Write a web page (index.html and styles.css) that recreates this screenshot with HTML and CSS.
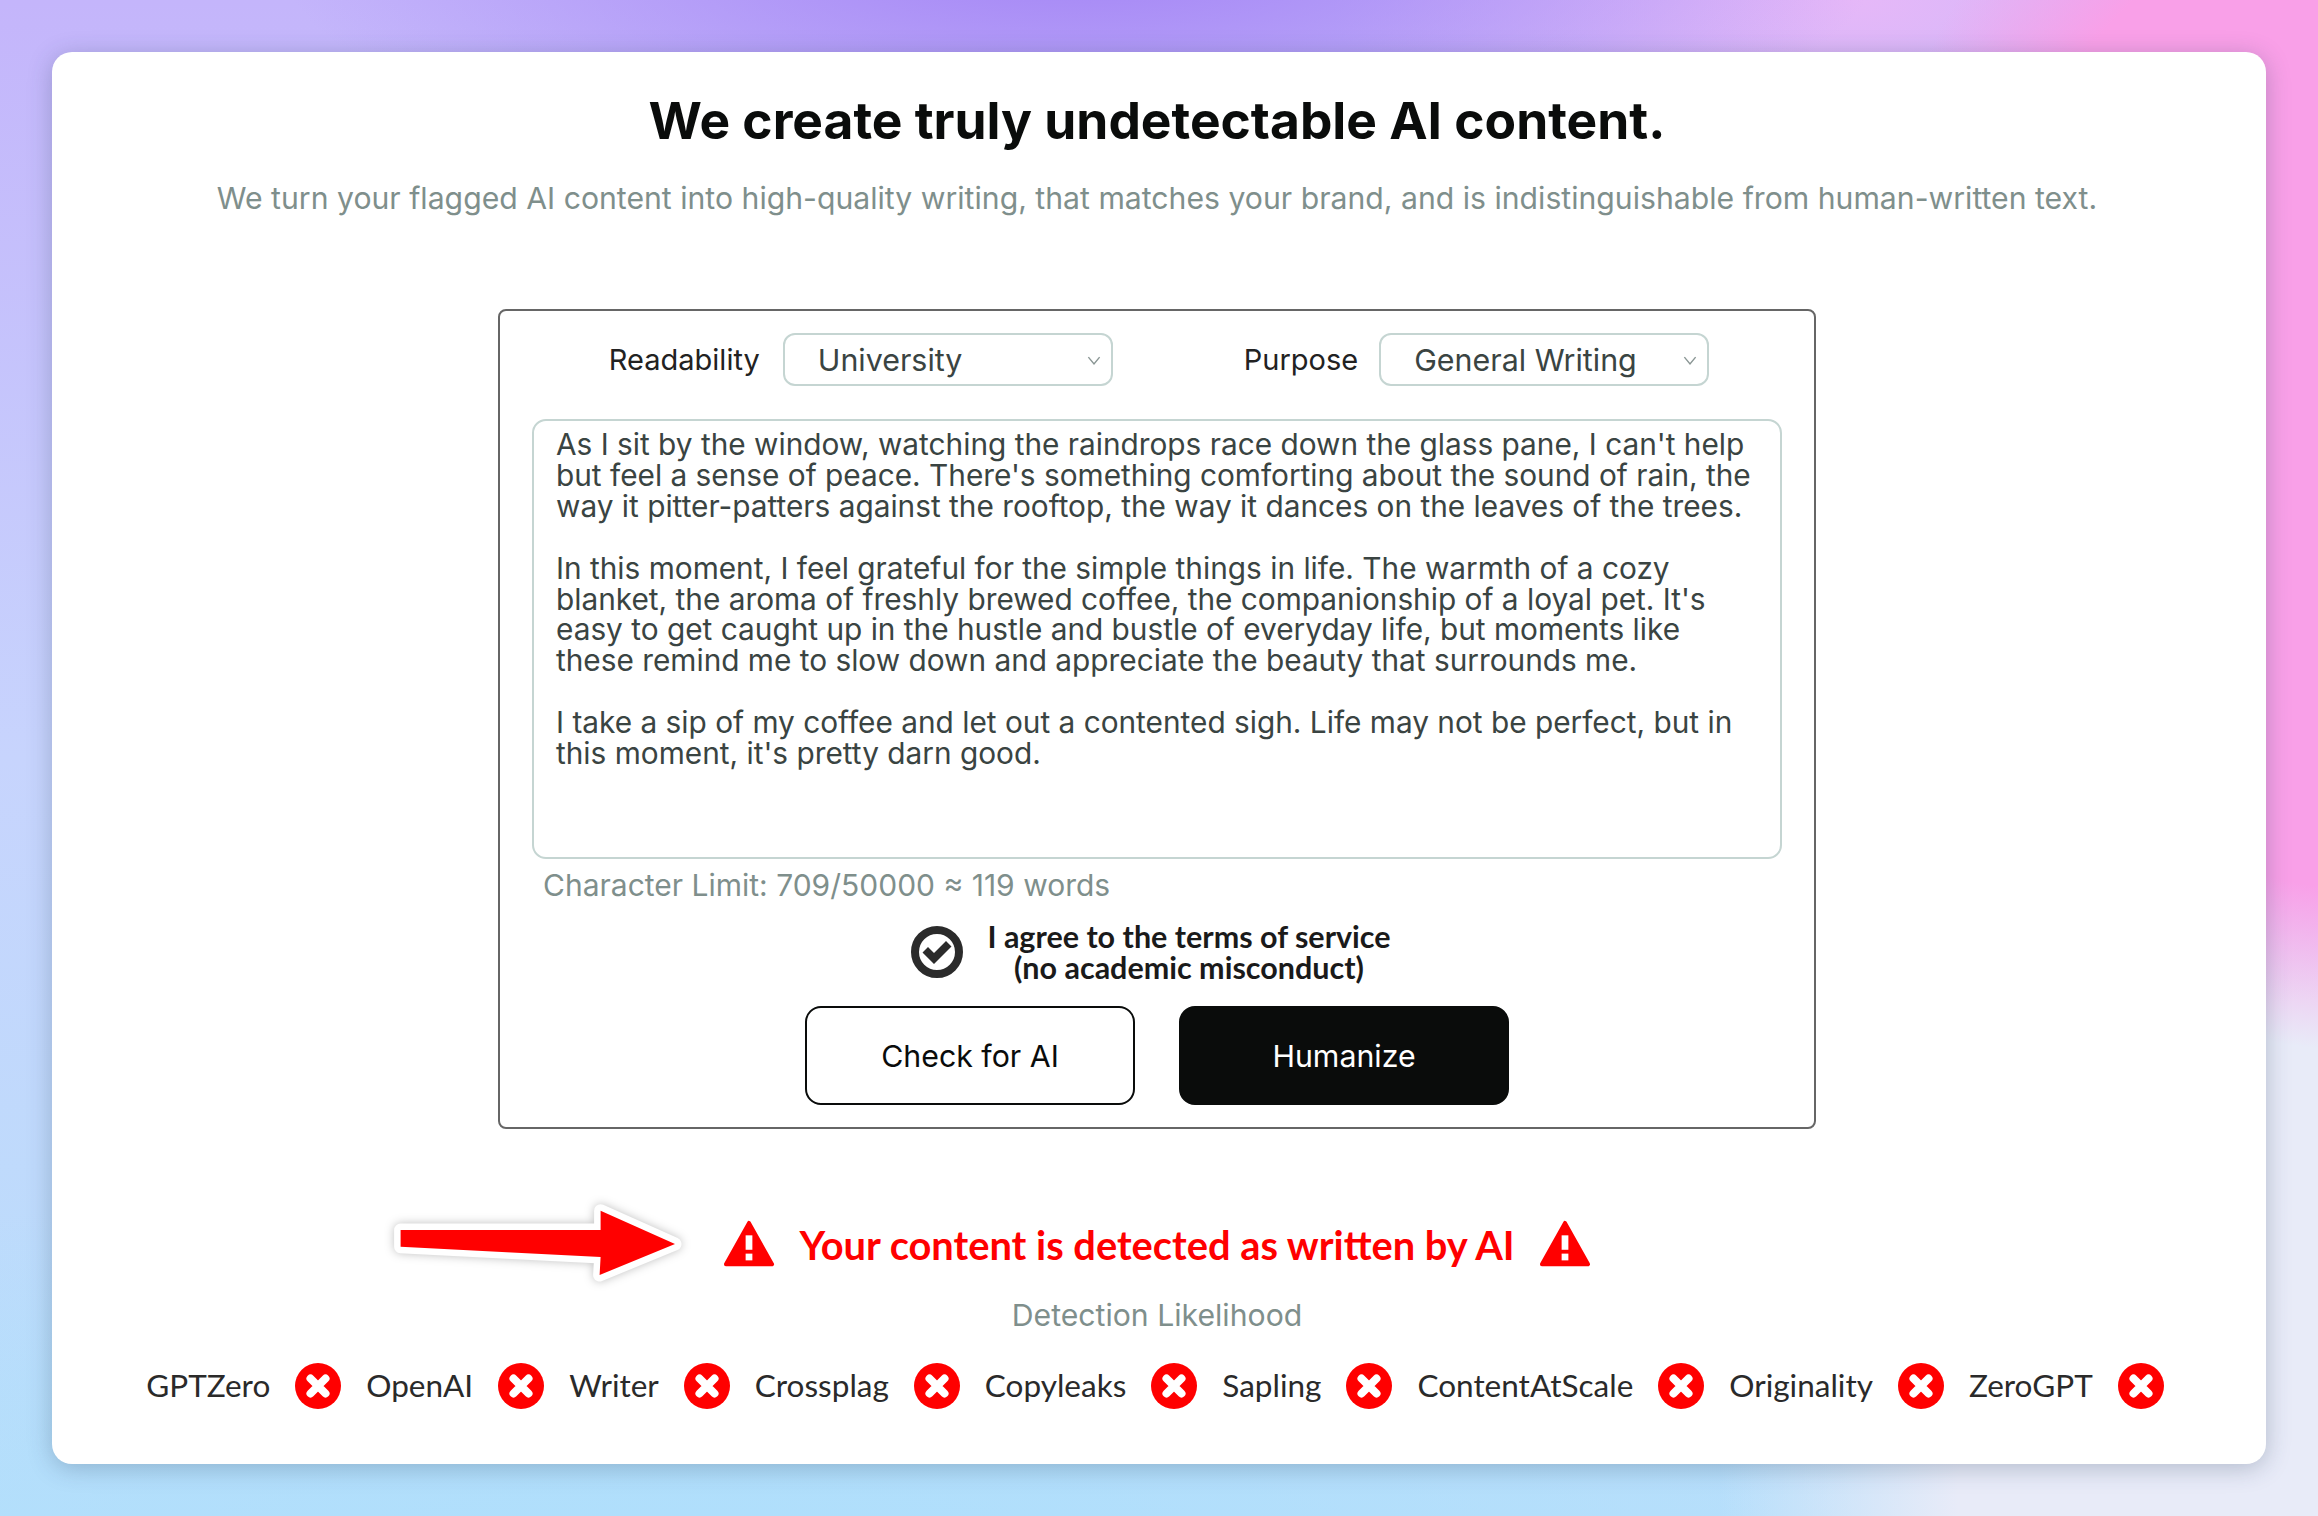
FILE: index.html
```html
<!DOCTYPE html>
<html>
<head>
    <title>Undetectable AI</title>
    <link rel="stylesheet" href="styles.css">
</head>
<body>
    <div class="card">
        <h1>We create truly undetectable AI content.</h1>
        <p class="subtitle">We turn your flagged AI content into high-quality writing, that matches your brand, and is indistinguishable from human-written text.</p>

        <div class="editor">
            <div class="options">
                <label for="readability" class="first-label">Readability</label>
                <div class="picker-wrap">
                    <select id="readability" class="picker">
                        <option>University</option>
                    </select>
                    <svg class="chevron" viewBox="0 0 12 8"><path d="M1 1l5 6 5-6" fill="none" stroke="#8a9694" stroke-width="1.3"/></svg>
                </div>
                <label for="purpose" class="second-label">Purpose</label>
                <div class="picker-wrap">
                    <select id="purpose" class="picker">
                        <option>General Writing</option>
                    </select>
                    <svg class="chevron" viewBox="0 0 12 8"><path d="M1 1l5 6 5-6" fill="none" stroke="#8a9694" stroke-width="1.3"/></svg>
                </div>
            </div>
            <textarea id="content" class="content" spellcheck="false">As I sit by the window, watching the raindrops race down the glass pane, I can't help but feel a sense of peace. There's something comforting about the sound of rain, the way it pitter-patters against the rooftop, the way it dances on the leaves of the trees.

In this moment, I feel grateful for the simple things in life. The warmth of a cozy blanket, the aroma of freshly brewed coffee, the companionship of a loyal pet. It's easy to get caught up in the hustle and bustle of everyday life, but moments like these remind me to slow down and appreciate the beauty that surrounds me.

I take a sip of my coffee and let out a contented sigh. Life may not be perfect, but in this moment, it's pretty darn good.</textarea>
            <div class="limit">Character Limit: 709/50000 ≈ 119 words</div>
            <div class="agree">
                <svg class="agree-icon" viewBox="0 0 52 52">
                    <circle cx="26" cy="26" r="22" fill="none" stroke="#2b2b2b" stroke-width="8"/>
                    <path d="M11.5 26.5l5.5-5.5 6 6 12-12 5.5 5.5-17.5 17.5z" fill="#2b2b2b"/>
                </svg>
                <div class="agree-text">I agree to the terms of service<br>(no academic misconduct)</div>
            </div>
            <div class="buttons">
                <button class="btn btn-outline">Check for AI</button>
                <button class="btn btn-dark">Humanize</button>
            </div>
        </div>

        <div class="alert">
            <svg class="arrow" viewBox="0 0 320 110">
                <path d="M20.6 40L220.6 40 220.6 20.7 295 54 219.6 85 220.6 67 20.6 56.7z" fill="#ff0000" stroke="#fff" stroke-width="13" stroke-linejoin="round" paint-order="stroke"/>
            </svg>
            <svg class="warn" viewBox="0 0 54 50">
                <path d="M27 3L51 46H3z" fill="#ff0000" stroke="#ff0000" stroke-width="4" stroke-linejoin="round"/>
                <rect x="23.5" y="16" width="7" height="15" fill="#fff"/>
                <rect x="23.5" y="35" width="7" height="7" fill="#fff"/>
            </svg>
            <span>Your content is detected as written by AI</span>
            <svg class="warn" viewBox="0 0 54 50">
                <path d="M27 3L51 46H3z" fill="#ff0000" stroke="#ff0000" stroke-width="4" stroke-linejoin="round"/>
                <rect x="23.5" y="16" width="7" height="15" fill="#fff"/>
                <rect x="23.5" y="35" width="7" height="7" fill="#fff"/>
            </svg>
        </div>

        <div class="likelihood">Detection Likelihood</div>

        <div class="detectors">
            <span>GPTZero</span>
            <svg class="fail" viewBox="0 0 46 46"><use href="#x-mark"/></svg>
            <span>OpenAI</span>
            <svg class="fail" viewBox="0 0 46 46"><use href="#x-mark"/></svg>
            <span>Writer</span>
            <svg class="fail" viewBox="0 0 46 46"><use href="#x-mark"/></svg>
            <span>Crossplag</span>
            <svg class="fail" viewBox="0 0 46 46"><use href="#x-mark"/></svg>
            <span>Copyleaks</span>
            <svg class="fail" viewBox="0 0 46 46"><use href="#x-mark"/></svg>
            <span>Sapling</span>
            <svg class="fail" viewBox="0 0 46 46"><use href="#x-mark"/></svg>
            <span>ContentAtScale</span>
            <svg class="fail" viewBox="0 0 46 46"><use href="#x-mark"/></svg>
            <span>Originality</span>
            <svg class="fail" viewBox="0 0 46 46"><use href="#x-mark"/></svg>
            <span>ZeroGPT</span>
            <svg class="fail" viewBox="0 0 46 46"><use href="#x-mark"/></svg>
        </div>
    </div>

    <svg class="defs" width="0" height="0">
        <symbol id="x-mark" viewBox="0 0 46 46">
            <circle cx="23" cy="23" r="23" fill="#ff0000"/>
            <path d="M15.5 15.5L30.5 30.5M30.5 15.5L15.5 30.5" stroke="#fff" stroke-width="8" stroke-linecap="round"/>
        </symbol>
    </svg>
</body>
</html>
```

FILE: styles.css
```css
html, body {
    height: 100%;
}

body {
    margin: 0;
    padding: 52px;
    box-sizing: border-box;
    font-family: Lato, sans-serif;
    color: #222;
    background-color: #c9d6fb;
    background-image:
        radial-gradient(ellipse 800px 230px at 1080px -40px, #a485f5 0%, rgba(164, 133, 245, 0) 100%),
        radial-gradient(ellipse 500px 650px at 2350px 400px, #f9a0e8 0%, #f9a0e8 75%, rgba(249, 160, 232, 0) 100%),
        radial-gradient(ellipse 520px 200px at 1850px 0, #e6b8f8 0%, rgba(230, 184, 248, 0) 100%),
        radial-gradient(ellipse 600px 860px at 2318px 1516px, #e8ebf8 0%, #e8ebf8 60%, rgba(232, 235, 248, 0) 100%),
        radial-gradient(ellipse 1400px 500px at 700px 1650px, #addffc 0%, rgba(173, 223, 252, 0) 100%),
        linear-gradient(180deg, #c4b5fb 0%, #c7d4fd 50%, #b8dffb 100%);
    overflow: hidden;
}

.card {
    background-color: #fff;
    border-radius: 20px;
    height: 1412px;
    padding-right: 4px;
    box-shadow: 0 4px 24px rgba(40, 60, 90, 0.28);
    display: flex;
    flex-direction: column;
    align-items: center;
}

h1 {
    font-family: Inter, sans-serif;
    font-size: 51.5px;
    font-weight: 700;
    line-height: 64px;
    color: #0a0c0b;
    margin: 36px 0 0;
}

.subtitle {
    font-family: Inter, sans-serif;
    font-size: 30.2px;
    line-height: 40px;
    color: #7f8f8c;
    margin: 26px 0 0;
}

.editor {
    width: 1314px;
    height: 816px;
    border: 2px solid #666;
    border-radius: 8px;
    margin-top: 91px;
    display: flex;
    flex-direction: column;
    align-items: center;
}

.options {
    display: flex;
    align-items: center;
    margin-top: 22px;
    margin-left: 4px;
    font-family: Inter, sans-serif;
    font-size: 29px;
    color: #222;
}

.first-label {
    margin-right: 23px;
}

.second-label {
    margin-left: 131px;
    margin-right: 21px;
}

.picker-wrap {
    position: relative;
}

.picker {
    display: block;
    width: 330px;
    height: 53px;
    padding: 0 33px;
    border: 2px solid #c5d5d2;
    border-radius: 12px;
    background-color: #fff;
    color: #3a4442;
    font-family: Inter, sans-serif;
    font-size: 30.4px;
    appearance: none;
}

.chevron {
    position: absolute;
    right: 12px;
    top: 23px;
    width: 14px;
    height: 9px;
}

.content {
    width: 1250px;
    height: 440px;
    box-sizing: border-box;
    margin-top: 33px;
    padding: 8px 22px;
    border: 2px solid #c5d5d2;
    border-radius: 14px;
    color: #3a4442;
    font-family: Inter, sans-serif;
    font-size: 29.8px;
    line-height: 30.9px;
    resize: none;
    outline: none;
}

.limit {
    align-self: flex-start;
    margin: 6px 0 0 43px;
    font-family: Inter, sans-serif;
    font-size: 30px;
    line-height: 40px;
    color: #7f8f8c;
}

.agree {
    display: flex;
    align-items: center;
    margin-top: 16px;
    margin-right: 12px;
}

.agree-icon {
    width: 52px;
    height: 52px;
    margin-right: 24px;
}

.agree-text {
    font-size: 30.5px;
    font-weight: 700;
    line-height: 31px;
    text-align: center;
    color: #1a1a1a;
}

.buttons {
    display: flex;
    gap: 44px;
    margin-top: 23px;
}

.btn {
    width: 330px;
    height: 99px;
    box-sizing: border-box;
    border: 2px solid #0a0c0b;
    border-radius: 16px;
    font-family: Inter, sans-serif;
    font-size: 30.3px;
}

.btn-outline {
    background-color: #fff;
    color: #0a0c0b;
}

.btn-dark {
    background-color: #0a0c0b;
    color: #fff;
}

.alert {
    position: relative;
    display: flex;
    align-items: center;
    gap: 24px;
    margin-top: 85px;
    height: 60px;
    font-size: 39.8px;
    font-weight: 700;
    color: #ff0000;
}

.warn {
    width: 52px;
    height: 50px;
}

.arrow {
    position: absolute;
    left: -343px;
    top: -24px;
    width: 320px;
    height: 110px;
    filter: drop-shadow(0 0 5px rgba(0, 0, 0, 0.25));
}

.likelihood {
    margin-top: 21px;
    font-family: Inter, sans-serif;
    font-size: 30.2px;
    line-height: 40px;
    color: #7f8f8c;
}

.detectors {
    display: flex;
    align-items: center;
    gap: 25px;
    margin-top: 28px;
    margin-right: 4px;
    font-size: 31.5px;
    color: #2a2a2a;
}

.detectors span {
    margin-top: -2px;
}

.fail {
    width: 46px;
    height: 46px;
}

.defs {
    position: absolute;
}
```
